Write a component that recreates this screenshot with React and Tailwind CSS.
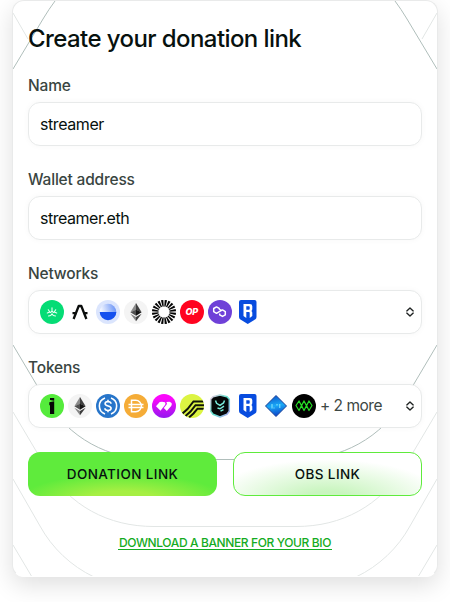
import React from "react";

const Svg = ({ children }) => (
  <svg className="h-6 w-6 shrink-0" viewBox="0 0 24 24" fill="none">{children}</svg>
);

const Bloom = () => (
  <Svg>
    <circle cx="12" cy="12" r="12" fill="#05dc75" />
    <g stroke="#eafff4" strokeWidth="1.100" strokeLinecap="round" strokeLinejoin="round">
      <path d="M12 7.800v3.400M12 11.200l-1.500 1.300M12 11.200l1.500 1.300M8.300 9.800l1.500 2.200-2.500 1M15.700 9.800 14.200 12l2.500 1M8.500 16l2.200-.5L12 13.800l1.300 1.700 2.200.5" />
    </g>
  </Svg>
);

const Arch = () => (
  <Svg>
    <g stroke="#0b0d0c" strokeWidth="2.300" strokeLinejoin="round">
      <path d="M5.600 19 10.700 6h2.600L18.400 19" />
      <path d="M4.500 13.200h4M15.500 13.200h4" />
    </g>
  </Svg>
);

const Base = () => (
  <Svg>
    <defs>
      <linearGradient id="sky" gradientUnits="userSpaceOnUse" x1="5" y1="11" x2="19" y2="7">
        <stop stopColor="#f4f7ff" />
        <stop offset="1" stopColor="#7098f7" />
      </linearGradient>
    </defs>
    <circle cx="12" cy="12" r="12" fill="#dbe5fd" />
    <circle cx="12" cy="12" r="8.300" fill="url(#sky)" />
    <path d="M3.700 12h16.600a8.300 8.300 0 0 1-16.600 0Z" fill="#1550ee" />
  </Svg>
);

const Eth = () => (
  <Svg>
    <circle cx="12" cy="12" r="12" fill="#f4f4f4" />
    <path d="m12 3-5.600 9.200L12 10Z" fill="#8b8b8b" />
    <path d="m12 3 5.600 9.200L12 10Z" fill="#3f3f3f" />
    <path d="m6.400 12.200 5.600-2.500v6Z" fill="#505050" />
    <path d="m17.600 12.200-5.600-2.500v6Z" fill="#151515" />
    <path d="M6.400 13.700 12 17v4.300Z" fill="#858585" />
    <path d="M17.600 13.700 12 17v4.300Z" fill="#3d3d3d" />
  </Svg>
);

const RAYS = Array.from({ length: 20 }, (_, i) => i * 18);
const Burst = () => (
  <Svg>
    {RAYS.map((a) => (
      <path key={a} d="M11.400 6.500 10.800 0h2.400l-.6 6.500Z" fill="#050505" transform={`rotate(${a + 9} 12 12)`} />
    ))}
  </Svg>
);

const Optimism = () => (
  <Svg>
    <circle cx="12" cy="12" r="12" fill="#ff0420" />
    <text x="11.800" y="15.200" textAnchor="middle" fontSize="9" fontWeight="800" fontStyle="italic" fill="#fff" fontFamily="Inter, sans-serif">OP</text>
  </Svg>
);

const Polygon = () => (
  <Svg>
    <circle cx="12" cy="12" r="12" fill="#6f41d8" />
    <path d="M13.300 10.500 11.200 9V8.400L8.500 6.900 5.700 8.500v3.200l2.800 1.600 2.800-1.600 3.200-1.800 2.800 1.700v3.200l-2.800 1.600-2.800-1.600v-1.300" stroke="#fff" strokeWidth="1.500" strokeLinejoin="round" />
  </Svg>
);

const Ronin = () => (
  <Svg>
    <path d="M3 2Q3 0 5 0h13.500q2 0 2 2v15q0 1.500-1.400 2.600L11.750 24l-7.300-4.400Q3 18.500 3 17Z" fill="#084cdf" />
    <path fillRule="evenodd" d="M7.500 4h6.300Q16.300 4 16.300 6.300V9q0 1.300-1 2 1 .6 1 1.800V16l-2.600 2v-5.300q0-.7-.8-.7h-2.600v6L7.500 16ZM10.300 6.300V9.700h2.600q.8 0 .8-.7V7q0-.7-.8-.7Z" fill="#fff" />
  </Svg>
);

const Idriss = () => (
  <Svg>
    <circle cx="12" cy="12" r="12" fill="#55eb3c" />
    <path d="M10 4h4.200v2.700L10 5.900ZM9.300 8.300l4.900-1V20H10v-8.500l-.7-.4Z" fill="#050805" />
  </Svg>
);

const Usdc = () => (
  <Svg>
    <circle cx="12" cy="12" r="12" fill="#2775ca" />
    <path d="M9 4a8.500 8.500 0 0 0 0 16M15 4a8.500 8.500 0 0 1 0 16" stroke="#fff" strokeWidth="1.600" />
    <path d="M15 9.700c0-1.400-1.200-2.100-3-2.100s-2.900.8-2.900 2.100c0 3.100 6 1.500 6 4.600 0 1.400-1.300 2.200-3.100 2.200s-3.100-.8-3.100-2.200M12 5.800v1.800M12 16.500v1.800" stroke="#fff" strokeWidth="1.600" />
  </Svg>
);

const Dai = () => (
  <Svg>
    <circle cx="12" cy="12" r="12" fill="#f5ac37" />
    <path d="M7.500 6.300h4.200a5.700 5.700 0 0 1 0 11.400H7.500ZM4.500 10.500h15M4.500 13.500h15" stroke="#fff" strokeWidth="1.500" />
  </Svg>
);

const Prime = () => (
  <Svg>
    <defs>
      <linearGradient id="magenta" gradientUnits="userSpaceOnUse" x1="12" y1="0" x2="12" y2="24">
        <stop offset=".2" stopColor="#fb08fb" />
        <stop offset="1" stopColor="#9418ef" />
      </linearGradient>
    </defs>
    <circle cx="12" cy="12" r="12" fill="url(#magenta)" />
    <path d="M4 12.200 7.700 8q2.500-.8 5.300.2 1 1.300 0 2.900l-4.500 5.700Z" fill="#fff" />
    <path d="m14.300 8 3.200-.2q3.500 1 1.700 4.200l-4.400 5-3-3 3-3.700q.5-1-.5-2.300Z" fill="#fff" />
  </Svg>
);

const Stripes = () => (
  <Svg>
    <defs><clipPath id="disc"><circle cx="12" cy="12" r="12" /></clipPath></defs>
    <circle cx="12" cy="12" r="12" fill="#dcf442" />
    <g clipPath="url(#disc)" stroke="#10140a" strokeWidth="2">
      <path d="m2.500 19.500 5-4.500 6-7.500H24M5.500 22l5-4.500 5-6.300H24M9 23.500l4.500-4 4-4.800H24" />
    </g>
  </Svg>
);

const Yield = () => (
  <Svg>
    <defs>
      <linearGradient id="prism" gradientUnits="userSpaceOnUse" x1="1" y1="3" x2="23" y2="21">
        <stop stopColor="#eac6df" /><stop offset=".5" stopColor="#5ce1cb" /><stop offset="1" stopColor="#b6a1f2" />
      </linearGradient>
    </defs>
    <path d="M5 2.800 12 1l7 1.800 2.300 2.400v12L19 20.300 12 23l-7-2.700-2.300-3.100v-12Z" fill="#050708" stroke="url(#prism)" strokeWidth="1.500" strokeLinejoin="round" />
    <path d="M7.500 6.500 8.600 9.300 12 11.300 15.500 9 16.500 6.500M9.500 14l2.500.8 4-2.600M12.500 17.200l3-1.500" stroke="#79ecdc" strokeWidth="1.500" />
  </Svg>
);

const Diamond = () => (
  <Svg>
    <defs>
      <linearGradient id="azure" gradientUnits="userSpaceOnUse" x1="10" y1="1" x2="14" y2="23">
        <stop stopColor="#0b53cd" /><stop offset=".48" stopColor="#19a9f6" /><stop offset="1" stopColor="#0a37c4" />
      </linearGradient>
    </defs>
    <path d="M12 1.500 22.500 12 12 22.500 1.500 12Z" fill="url(#azure)" stroke="#173f96" strokeWidth="1" strokeLinejoin="round" />
    <path d="M8 10v4.500M10 13.500v1M13 10v1.500M15.800 10v4" stroke="#8de9ff" strokeWidth="1" />
  </Svg>
);

const Wave = () => (
  <Svg>
    <circle cx="12" cy="12" r="12" fill="#000" />
    <path d="M4 11.500 7 7l2.500 4.500L7 16.500ZM9.500 11.500 12 7l2.500 4.500-2.500 5ZM14.500 11.500 17 7l3 4.500-3 5ZM7 7l5 9.500M12 7l5 9.500M12 7l-5 9.500M17 7l-5 9.500" stroke="#25dc25" strokeWidth="1.200" strokeLinejoin="round" />
  </Svg>
);

const Sort = () => (
  <svg className="ml-auto h-3 w-3 shrink-0" viewBox="0 0 12 12" fill="none" stroke="#202423" strokeWidth="1.400" strokeLinejoin="round" strokeLinecap="round">
    <path d="M2.800 4.900 6 2l3.200 2.900M2.800 7.100 6 10l3.200-2.900" />
  </svg>
);

const Contours = () => (
  <svg className="absolute left-0 top-0 h-[576px] w-[424px]" viewBox="13 1 424 576" fill="none">
    <g stroke="#b0bebb">
      <path d="M13 69 43 19Q49 9 55 1M437 69 407 19Q401 9 395 1" />
      <path d="M13 345 45 399C69 438 108 459.500 154 459.500H296C342 459.500 381 438 405 399L437 345" />
    </g>
    <g stroke="#e2e6e5">
      <path d="m13 13 15 26M437 13l-15 26" />
      <path d="m13 412 32 54C70 506 108 526.500 154 526.500H296C342 526.500 380 506 405 466L437 412" />
      <path d="m13 479 27 47C52 548 71 566 94 577M437 479l-27 47C398 548 379 566 356 577" />
      <path d="m13 545 19 32M437 545l-19 32" />
    </g>
  </svg>
);

const Field = ({ label, children }) => (
  <div className="flex flex-col gap-1.5">
    <div className="h-5 text-[15.500px] font-medium leading-5 tracking-[-0.180px] text-[#394541]">{label}</div>
    <div className="flex h-11 items-center rounded-xl border border-[#e8eaea] bg-white pl-[11px] pr-[5px] text-base shadow-[0_0_6px_rgba(0,0,0,0.035)]">{children}</div>
  </div>
);

export default function App() {
  return (
    <main className="h-[602px] overflow-hidden bg-white px-3 font-['Inter',sans-serif] text-[#07110e]">
      <section className="relative h-[577px] overflow-hidden rounded-xl border border-[#e9eaea] border-b-white bg-white shadow-[0_8px_24px_rgba(0,0,0,0.13)]">
        <Contours />
        <div className="relative px-[15px] pt-[22px]">
          <h1 className="h-8 whitespace-nowrap text-2xl font-medium leading-8 tracking-[-0.580px]">Create your donation link</h1>
          <div className="mt-[21px] flex flex-col gap-6">
            <Field label="Name"><span className="tracking-[-0.420px]">streamer</span></Field>
            <Field label="Wallet address"><span className="tracking-[-0.480px]">streamer.eth</span></Field>
            <Field label="Networks">
              <div className="flex gap-1"><Bloom /><Arch /><Base /><Eth /><Burst /><Optimism /><Polygon /><Ronin /></div>
              <Sort />
            </Field>
            <Field label="Tokens">
              <div className="flex gap-1"><Idriss /><Eth /><Usdc /><Dai /><Prime /><Stripes /><Yield /><Ronin /><Diamond /><Wave /><span className="whitespace-nowrap text-[15.500px] tracking-[-0.500px] text-[#3d4744]">+ 2 more</span></div>
              <Sort />
            </Field>
          </div>
          <div className="mt-6 grid grid-cols-2 gap-4 text-[13.500px] font-medium tracking-[0.400px]">
            <button className="h-11 rounded-xl bg-[#5feb3c] bg-[radial-gradient(ellipse_55%_60%_at_50%_110%,#a6ef43_35%,transparent_100%)]">DONATION LINK</button>
            <button className="h-11 rounded-xl border border-[#5feb3c] bg-white bg-[radial-gradient(ellipse_62%_95%_at_50%_110%,#c9f5bf_20%,transparent_100%)]">OBS LINK</button>
          </div>
          <div className="mt-[39px] flex justify-center">
            <a className="h-[15px] whitespace-nowrap border-b border-[#14ab22] px-px text-xs font-medium leading-4 tracking-[-0.380px] text-[#14ab22]">DOWNLOAD A BANNER FOR YOUR BIO</a>
          </div>
        </div>
      </section>
    </main>
  );
}
